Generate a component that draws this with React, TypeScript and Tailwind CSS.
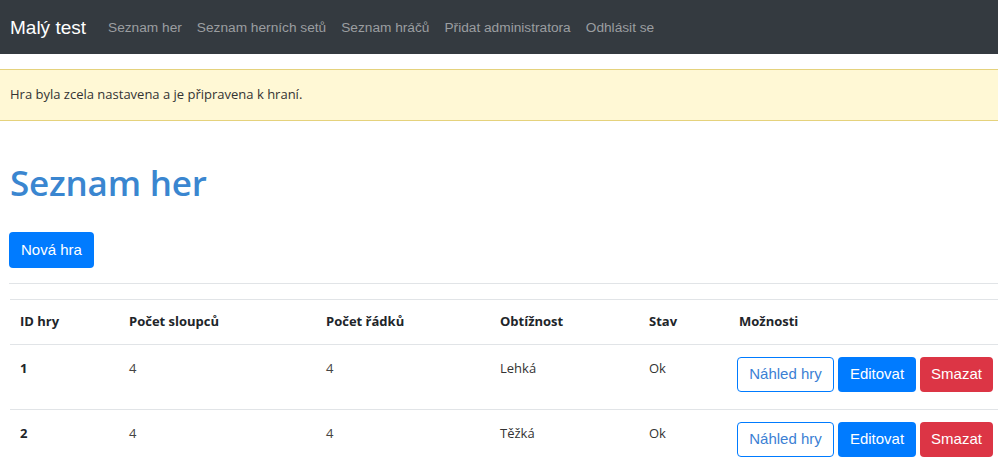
import React from "react";

const rows = [
  { id: "1", cols: "4", rowsN: "4", diff: "Lehká", state: "Ok" },
  { id: "2", cols: "4", rowsN: "4", diff: "Těžká", state: "Ok" },
];

export default function App() {
  return (
    <div className="w-[998px] h-[466px] overflow-hidden bg-white font-['Open_Sans',sans-serif] text-[#212529]">
      <nav className="h-[54px] bg-[#343a40] flex items-center px-[10px] pt-[2px] font-['Liberation_Sans',Arial,sans-serif]">
        <span className="text-white text-[19px] mr-[22px]">Malý test</span>
        <div className="flex gap-[15px] text-[13.7px] text-[#9b9ea1]">
          <span>Seznam her</span>
          <span>Seznam herních setů</span>
          <span>Seznam hráčů</span>
          <span>Přidat administratora</span>
          <span>Odhlásit se</span>
        </div>
      </nav>
      <div className="mt-[15px] h-[52px] bg-[#fff8d5] border-y border-[#e5d27c] flex items-center px-[10px] text-[13px] text-[#333]">
        Hra byla zcela nastavena a je připravena k hraní.
      </div>
      <div className="pl-[9px]">
        <h1 className="mt-[41px] text-[35px] leading-[42px] font-semibold text-[#3a86d0] pl-[1px] tracking-[-0.2px]">
          Seznam her
        </h1>
        <button className="mt-[28px] h-[36px] px-[12px] rounded-[4px] bg-[#007bff] text-white text-[15px] font-['Liberation_Sans',Arial,sans-serif]">
          Nová hra
        </button>
        <div className="mt-[15px] border-t border-[#e1e4e7]" />
        <table className="mt-[15px] border-collapse text-[13px] table-fixed w-[1000px] ml-[1px]">
          <thead>
            <tr className="border-t border-b border-[#e1e4e7] h-[45px]">
              <th className="w-[109px] text-left font-bold pl-[10px]">ID hry</th>
              <th className="w-[197px] text-left font-bold pl-[10px]">Počet sloupců</th>
              <th className="w-[174px] text-left font-bold pl-[10px]">Počet řádků</th>
              <th className="w-[149px] text-left font-bold pl-[10px]">Obtížnost</th>
              <th className="w-[90px] text-left font-bold pl-[10px]">Stav</th>
              <th className="text-left font-bold pl-[10px]">Možnosti</th>
            </tr>
          </thead>
          <tbody>
            {rows.map((r) => (
              <tr key={r.id} className="border-b border-[#e1e4e7] h-[65px] align-top">
                <td className="pl-[10px] pt-[12px] font-bold leading-[22px]">{r.id}</td>
                <td className="pl-[10px] pt-[12px] text-[#444] leading-[22px]">{r.cols}</td>
                <td className="pl-[10px] pt-[12px] text-[#444] leading-[22px]">{r.rowsN}</td>
                <td className="pl-[10px] pt-[12px] text-[#333] leading-[22px]">{r.diff}</td>
                <td className="pl-[10px] pt-[12px] text-[#333] leading-[22px]">{r.state}</td>
                <td className="pl-[8px] pt-[12px]">
                  <div className="flex gap-[4px] font-['Liberation_Sans',Arial,sans-serif] text-[15px]">
                    <button className="h-[35px] w-[97px] rounded-[4px] border border-[#007bff] text-[#3b7fd4] bg-white">
                      Náhled hry
                    </button>
                    <button className="h-[35px] w-[78px] rounded-[4px] bg-[#007bff] text-white">
                      Editovat
                    </button>
                    <button className="h-[35px] w-[73px] rounded-[4px] bg-[#dc3545] text-white">
                      Smazat
                    </button>
                  </div>
                </td>
              </tr>
            ))}
          </tbody>
        </table>
      </div>
    </div>
  );
}
